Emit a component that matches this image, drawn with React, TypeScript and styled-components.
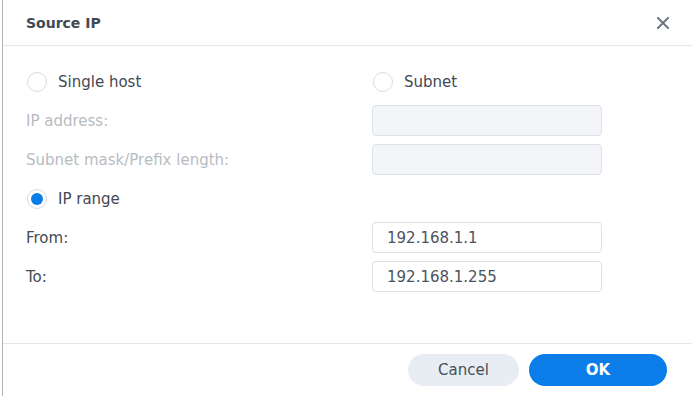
import styled, { createGlobalStyle } from 'styled-components';

const GlobalStyle = createGlobalStyle`
  html, body {
    margin: 0;
    padding: 0;
    background: #ffffff;
  }
  body {
    font-family: "DejaVu Sans", Verdana, sans-serif;
    font-size: 15px;
  }
`;

export default function App() {
  return (
    <>
      <GlobalStyle />
      <Dialog>
        <Header>
          <Title>Source IP</Title>
          <CloseButton type="button" aria-label="Close">
            <svg width="12" height="12" viewBox="0 0 12 12">
              <path d="M1 1L11 11M11 1L1 11" stroke="#6e7781" strokeWidth="2" strokeLinecap="square" />
            </svg>
          </CloseButton>
        </Header>
        <Body>
          <Form>
            <RadioRow>
              <Radio />
              <RadioLabel>Single host</RadioLabel>
            </RadioRow>
            <RadioRow>
              <Radio />
              <RadioLabel>Subnet</RadioLabel>
            </RadioRow>

            <FieldLabel $disabled>IP address:</FieldLabel>
            <TextBox $disabled />

            <FieldLabel $disabled>Subnet mask/Prefix length:</FieldLabel>
            <TextBox $disabled />

            <RadioRow>
              <Radio $checked />
              <RadioLabel>IP range</RadioLabel>
            </RadioRow>
            <span />

            <FieldLabel>From:</FieldLabel>
            <TextBox>192.168.1.1</TextBox>

            <FieldLabel>To:</FieldLabel>
            <TextBox>192.168.1.255</TextBox>
          </Form>
        </Body>
        <Footer>
          <Button type="button">Cancel</Button>
          <Button type="button" $primary>OK</Button>
        </Footer>
      </Dialog>
    </>
  );
}

const Dialog = styled.div`
  margin-left: 2px;
  height: 396px;
  border-left: 1px solid #b4b4b4;
  display: flex;
  flex-direction: column;
  background: #fff;
`;

const Header = styled.div`
  height: 45px;
  flex-shrink: 0;
  display: flex;
  align-items: center;
  justify-content: space-between;
  padding: 0 23px 0 23px;
  margin-right: 4px;
  border-bottom: 1px solid #e3e8ef;
`;

const Title = styled.div`
  font-weight: bold;
  font-size: 14px;
  color: #404a55;
  padding-top: 1px;
`;

const CloseButton = styled.button`
  border: none;
  background: none;
  padding: 0;
  width: 12px;
  height: 12px;
  display: flex;
  cursor: pointer;
`;

const Body = styled.div`
  flex: 1;
  padding: 20px 23px 0 23px;
`;

const Form = styled.div`
  display: grid;
  grid-template-columns: 346px 230px;
  grid-auto-rows: 31px;
  row-gap: 8px;
  align-items: center;
`;

const RadioRow = styled.label`
  display: flex;
  align-items: center;
  gap: 11px;
  height: 31px;
`;

const Radio = styled.span<{ $checked?: boolean }>`
  box-sizing: border-box;
  width: 20px;
  height: 20px;
  border-radius: 50%;
  border: 1px solid #d5dde7;
  background: #fff;
  margin-left: 1px;
  display: flex;
  align-items: center;
  justify-content: center;

  &::after {
    content: '';
    width: 12px;
    height: 12px;
    border-radius: 50%;
    background: ${(p) => (p.$checked ? '#0a7de8' : 'transparent')};
  }
`;

const RadioLabel = styled.span`
  color: #3f4853;
  font-size: 15px;
`;

const FieldLabel = styled.div<{ $disabled?: boolean }>`
  font-size: 15px;
  color: ${(p) => (p.$disabled ? '#b7bcc2' : '#434c57')};
`;

const TextBox = styled.div<{ $disabled?: boolean }>`
  box-sizing: border-box;
  height: 31px;
  border: 1px solid ${(p) => (p.$disabled ? '#dce2ea' : '#d9e0e8')};
  border-radius: 4px;
  background: ${(p) => (p.$disabled ? '#f3f5f8' : '#fff')};
  padding: 0 14px;
  display: flex;
  align-items: center;
  color: #4a535d;
  font-size: 15px;
`;

const Footer = styled.div`
  box-sizing: border-box;
  height: 53px;
  flex-shrink: 0;
  margin-right: 4px;
  border-top: 1px solid #e3e8ef;
  display: flex;
  align-items: flex-start;
  justify-content: flex-end;
  gap: 10px;
  padding: 10px 25px 0 0;
`;

const Button = styled.button<{ $primary?: boolean }>`
  height: 32px;
  width: ${(p) => (p.$primary ? '138px' : '111px')};
  border: none;
  border-radius: 16px;
  font-family: "DejaVu Sans", Verdana, sans-serif;
  font-size: 15px;
  font-weight: ${(p) => (p.$primary ? 'bold' : 'normal')};
  color: ${(p) => (p.$primary ? '#fff' : '#45505b')};
  background: ${(p) => (p.$primary ? '#0a7de8' : '#e8edf3')};
  cursor: pointer;
`;
